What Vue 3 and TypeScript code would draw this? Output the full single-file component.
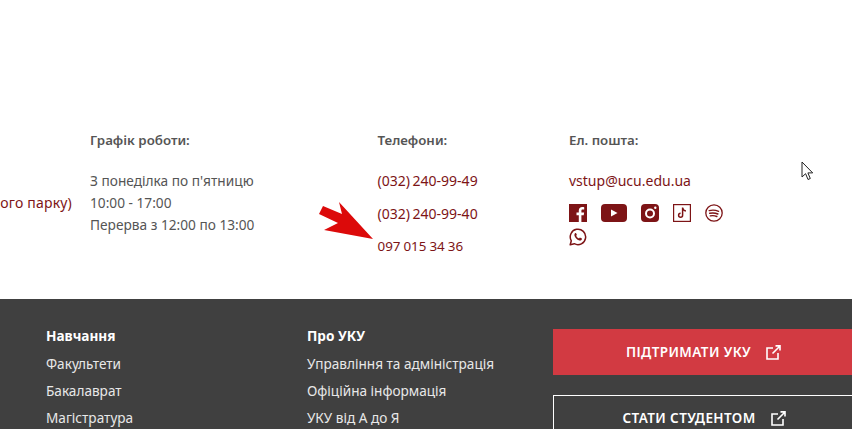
<script setup lang="ts">
const hours: string[] = ["З понеділка по п'ятницю", '10:00 - 17:00', 'Перерва з 12:00 по 13:00']
const phones: string[] = ['(032) 240-99-49', '(032) 240-99-40', '097 015 34 36']
const study: string[] = ['Факультети', 'Бакалаврат', 'Магістратура']
const about: string[] = ['Управління та адміністрація', 'Офіційна інформація', 'УКУ від А до Я']
</script>

<template>
  <div class="page">
    <section class="contacts">
      <div class="col address"><span class="link">ого парку)</span></div>
      <div class="col schedule">
        <h4>Графік роботи:</h4>
        <p v-for="h in hours" :key="h" class="hour">{{ h }}</p>
      </div>
      <div class="col phones">
        <h4>Телефони:</h4>
        <p v-for="p in phones" :key="p" class="phone link">{{ p }}</p>
      </div>
      <div class="col mail">
        <h4>Ел. пошта:</h4>
        <p class="link email">vstup@ucu.edu.ua</p>
        <div class="socials">
          <svg width="18" height="18" viewBox="0 0 18 18"><rect width="18" height="18" fill="#7d1416"/><path d="M12.4 18v-6.8h2.3l.4-2.7h-2.7V6.9c0-.8.3-1.3 1.4-1.3h1.4V3.2c-.3 0-1.100-.1-2-.1-2 0-3.400 1.200-3.400 3.500v1.900H7.500v2.700h2.300V18z" fill="#fff"/></svg>
          <svg class="yt" width="26" height="18" viewBox="0 0 26 18"><rect width="26" height="18" rx="4" fill="#7d1416"/><path d="M10 5.500v7l6.500-3.500z" fill="#fff"/></svg>
          <svg class="ig" width="18" height="18" viewBox="0 0 18 18"><rect width="18" height="18" rx="4" fill="#7d1416"/><circle cx="9" cy="9.500" r="4" fill="none" stroke="#fff" stroke-width="2"/><circle cx="14.300" cy="3.800" r="1.200" fill="#fff"/></svg>
          <svg class="tt" width="18" height="18" viewBox="0 0 18 18"><rect x=".6" y=".6" width="16.800" height="16.800" fill="none" stroke="#7d1416" stroke-width="1.200"/><path d="M9.600 3.500v7.800a2 2 0 1 1-2-2M9.600 3.500c.2 2 1.400 3.200 3.300 3.400" fill="none" stroke="#7d1416" stroke-width="1.500"/></svg>
          <svg class="sp" width="18" height="18" viewBox="0 0 18 18"><circle cx="9" cy="9" r="8.200" fill="none" stroke="#7d1416" stroke-width="1.300"/><path d="M4.200 6.600c3-.8 6.400-.6 9.400.7M4.700 9.300c2.700-.6 5.600-.4 8.200.7M5.300 11.900c2.200-.5 4.500-.3 6.600.6" fill="none" stroke="#7d1416" stroke-width="1.400" stroke-linecap="round"/></svg>
          <svg class="wa" width="18" height="18" viewBox="0 0 18 18"><path d="M1.200 16.800l1.100-4a7.700 7.700 0 1 1 3 2.900z" fill="none" stroke="#7d1416" stroke-width="1.500" stroke-linejoin="round"/><path d="M6.500 4.900c-1.200.6-1.400 2-.7 3.500.8 1.800 2.300 3.200 4 3.900 1.400.5 2.700.2 3.100-1 .1-.4.100-.7 0-.8l-2-1-.9 1c-1.200-.4-2.300-1.500-2.900-2.700l.8-.9-.9-2z" fill="#7d1416"/></svg>
        </div>
      </div>
      <svg class="cursor" width="13" height="20" viewBox="0 0 13 20"><path d="M1 1v15l3.600-3.300 2.400 5.800 2.300-1-2.400-5.600h4.800z" fill="#fff" stroke="#222" stroke-width="1"/></svg>
      <svg class="arrow" width="56" height="40" viewBox="0 0 56 40"><path d="M20 1 54 38 5 29 19 22 0 13 4 5 23 13z" fill="#dc0a0a"/></svg>
    </section>

    <footer class="footer">
      <div class="menu study">
        <h5>Навчання</h5>
        <a v-for="s in study" :key="s">{{ s }}</a>
      </div>
      <div class="menu about">
        <h5>Про УКУ</h5>
        <a v-for="a in about" :key="a">{{ a }}</a>
      </div>
      <div class="actions">
        <div class="btn solid">
          <span>ПІДТРИМАТИ УКУ</span>
          <svg width="15" height="15" viewBox="0 0 15 15"><path d="M7 3H1v11h11V8M6.500 8.500 14 1M9.500 .9H14V5.500" fill="none" stroke="#fff" stroke-width="1.600"/></svg>
        </div>
        <div class="btn outline">
          <span>СТАТИ СТУДЕНТОМ</span>
          <svg width="15" height="15" viewBox="0 0 15 15"><path d="M7 3H1v11h11V8M6.500 8.500 14 1M9.500 .9H14V5.500" fill="none" stroke="#fff" stroke-width="1.600"/></svg>
        </div>
      </div>
    </footer>
  </div>
</template>

<style scoped>
.page {
  position: relative;
  width: 852px;
  height: 429px;
  overflow: hidden;
  background: #fff;
  font-family: "Noto Sans", "Open Sans", sans-serif;
  font-size: 14px;
  color: #555;
}
.contacts {
  position: relative;
  height: 299px;
  display: flex;
  padding-top: 130px;
  box-sizing: border-box;
}
h4 { margin: 0 0 20px; font-size: 13.3px; line-height: 20px; font-weight: 600; color: #555; }
p { margin: 0; }
.link { color: #7d1416; }
.col { flex: none; }
.address { width: 72px; margin-right: 18px; padding-top: 62px; line-height: 22px; white-space: nowrap; display: flex; justify-content: flex-end; letter-spacing: .2px; }
.schedule { width: 287.5px; }
.hour { line-height: 22px; font-size: 13.7px; }
.phones { width: 191.5px; }
.phone { line-height: 33px; word-spacing: -1px; position: relative; top: -6px; }
.phone:last-child { font-size: 13.4px; word-spacing: -.5px; }
.mail { width: 170px; }
.email { line-height: 22px; }
.socials { display: flex; flex-wrap: wrap; width: 160px; column-gap: 14px; row-gap: 6px; margin-top: 12px; }
.cursor { position: absolute; left: 801px; top: 161px; }
.arrow { position: absolute; left: 319px; top: 201px; }
.footer {
  height: 130px;
  background: #404040;
  display: flex;
  padding: 27px 0 0 46px;
  box-sizing: border-box;
  color: #eee;
}
.menu { display: flex; flex-direction: column; }
.menu h5 { margin: 0 0 8px; font-size: 13.6px; line-height: 20px; font-weight: 700; color: #fff; }
.menu a { line-height: 20px; margin-bottom: 7px; font-size: 13.6px; color: #e8e8e8; white-space: nowrap; }
.study { width: 261px; }
.about { width: 246px; }
.actions { flex: 1; display: flex; flex-direction: column; gap: 20px; margin-top: 3px; }
.btn {
  height: 46px;
  flex: none;
  display: flex;
  align-items: center;
  justify-content: center;
  gap: 15px;
  color: #fff;
  font-weight: 600;
  font-size: 13.5px;
  letter-spacing: .4px;
  box-sizing: border-box;
  padding-left: 2px;
}
.solid { background: #d23a42; }
.outline { border: 1px solid #fff; border-right: 0; height: 46px; }
</style>
